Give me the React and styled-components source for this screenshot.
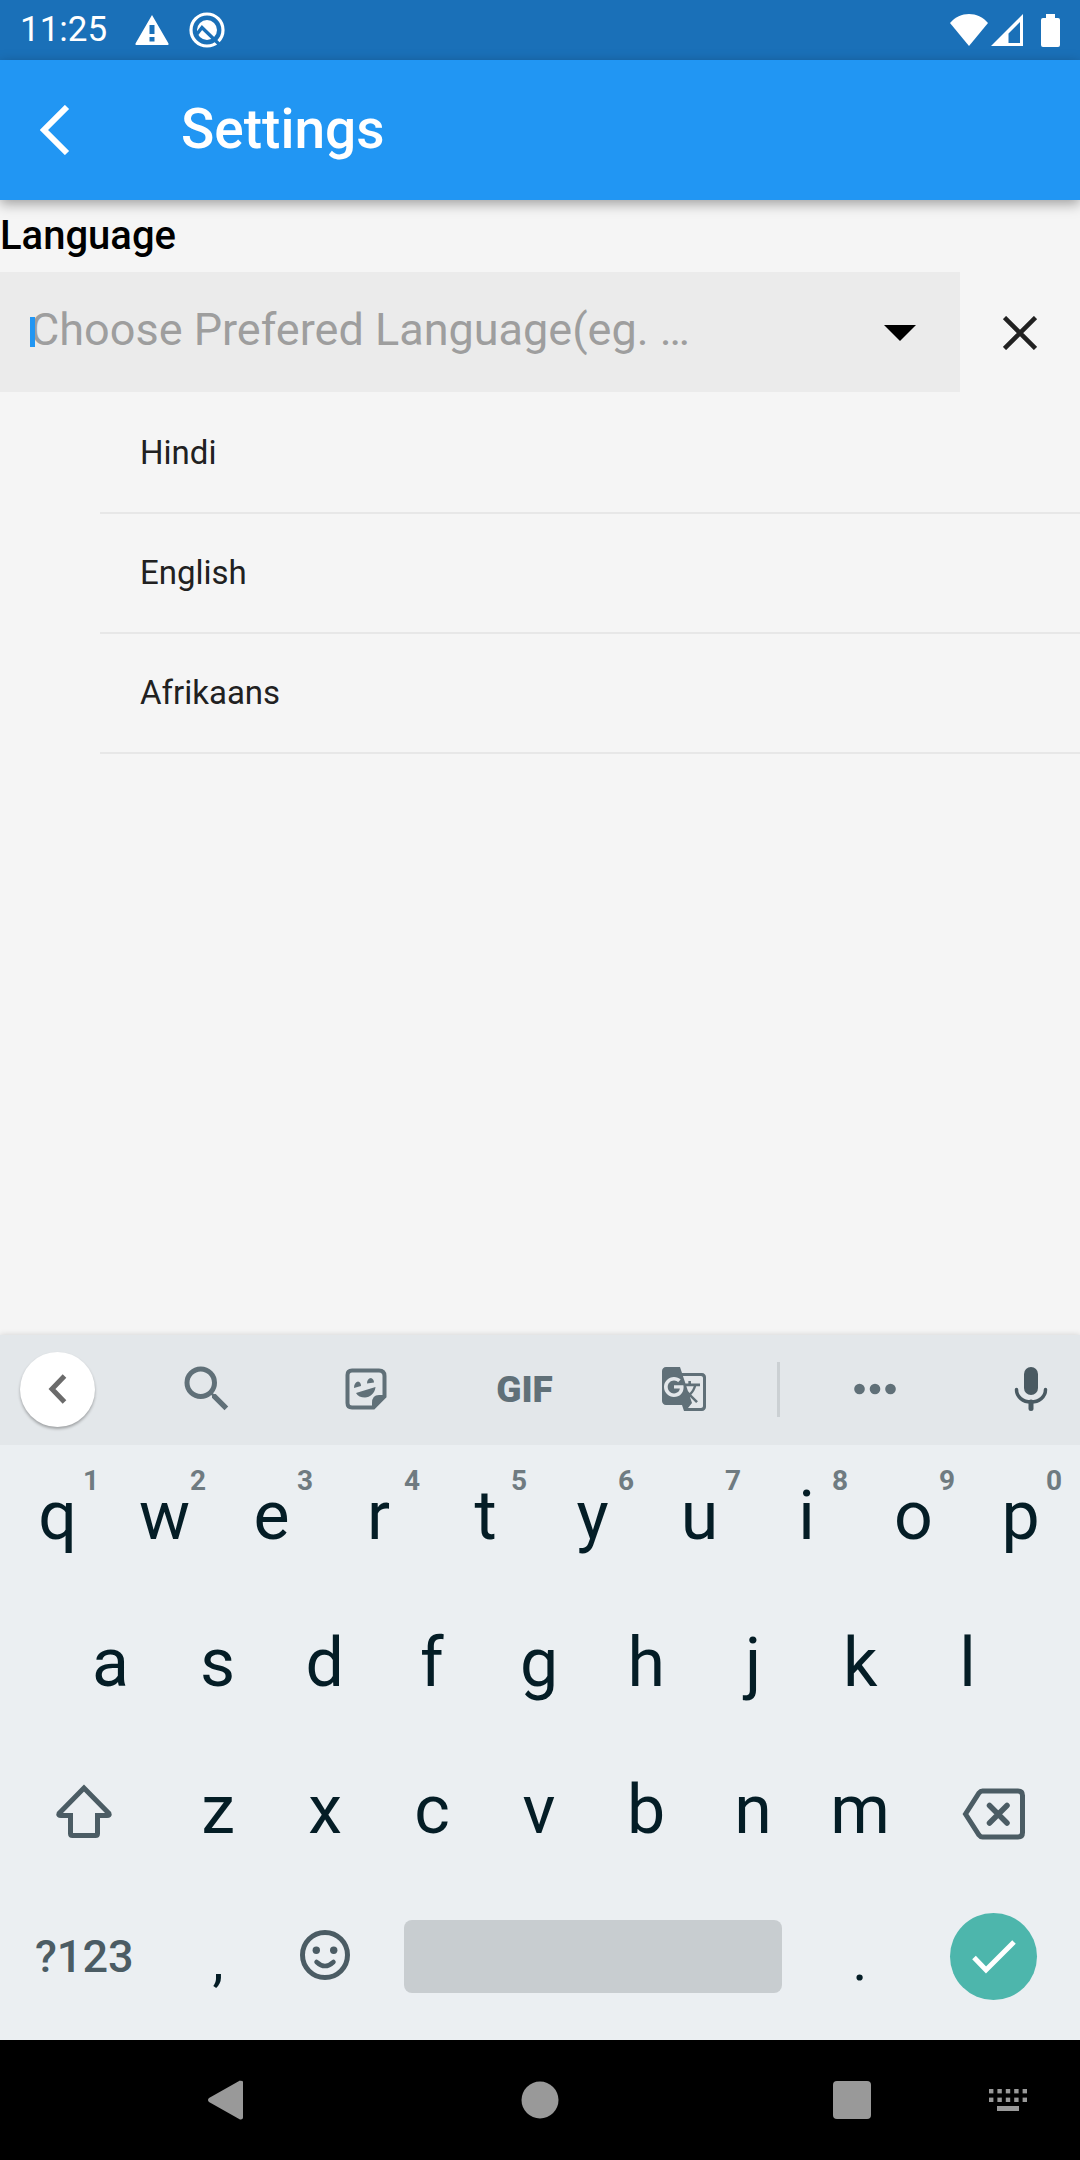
import React from "react";
import styled, { createGlobalStyle } from "styled-components";
import { MdSearch, MdGTranslate } from "react-icons/md";

const GlobalStyle = createGlobalStyle`
  *, *::before, *::after { box-sizing: border-box; }
  body {
    margin: 0;
    background: #f5f5f5;
    font-family: Roboto, "Liberation Sans", sans-serif;
  }
  button {
    margin: 0;
    padding: 0;
    border: 0;
    background: none;
    color: inherit;
    font: inherit;
    cursor: pointer;
  }
  svg { display: block; flex: none; }
`;

const Screen = styled.div`
  display: flex;
  flex-direction: column;
  min-height: 100vh;
`;

const StatusBar = styled.div`
  display: flex;
  align-items: center;
  justify-content: space-between;
  height: 60px;
  padding: 0 20px;
  background: #1a70b8;
  color: #fff;
`;

const StatusGroup = styled.div`
  display: flex;
  align-items: center;
  gap: ${(p) => p.$gap}px;
`;

const Clock = styled.span`
  margin-right: 8px;
  font-size: 35px;
  line-height: 42px;
`;

const AppBar = styled.header`
  position: relative;
  z-index: 1;
  display: flex;
  align-items: center;
  height: 140px;
  background: #2196f3;
  color: #fff;
  box-shadow: 0 4px 12px rgba(0, 0, 0, 0.35);
`;

const BackButton = styled.button`
  display: flex;
  align-items: center;
  width: 181px;
  height: 100%;
  padding-left: 40px;
`;

const Title = styled.h1`
  margin: 0;
  padding-bottom: 2px;
  font-size: 55px;
  font-weight: 500;
  line-height: 64px;
`;

const Content = styled.main`
  flex: 1;
  background: #f5f5f5;
`;

const FieldLabel = styled.label`
  display: block;
  color: #000;
  font-size: 40px;
  font-weight: 500;
  line-height: 72px;
`;

const PickerRow = styled.div`
  display: flex;
  height: 120px;
`;

const Field = styled.div`
  position: relative;
  display: flex;
  flex: 1;
  min-width: 0;
  background: #ebebeb;
`;

const LanguageInput = styled.input`
  flex: 1;
  min-width: 0;
  padding: 0 0 6px 30px;
  border: 0;
  outline: 0;
  background: transparent;
  color: #212121;
  font-family: inherit;
  font-size: 45px;
  &::placeholder { color: #9e9e9e; opacity: 1; }
`;

const Caret = styled.span`
  position: absolute;
  left: 30px;
  top: 45px;
  width: 5px;
  height: 30px;
  background: #2196f3;
`;

const PickerButton = styled.button`
  display: flex;
  align-items: center;
  justify-content: center;
  width: 120px;
  height: 100%;
  padding-top: 2px;
  color: ${(p) => p.$color};
`;

const LanguageList = styled.ul`
  margin: 0;
  padding: 2px 0 0 100px;
  list-style: none;
`;

const LanguageItem = styled.li`
  border-bottom: 2px solid #e7e7e7;
`;

const LanguageOption = styled.button`
  display: block;
  width: 100%;
  height: 118px;
  padding: 0 0 2px 40px;
  color: #212121;
  font-size: 33px;
  text-align: left;
`;

const Keyboard = styled.section`
  background: #ebeff2;
  box-shadow: 0 0 6px rgba(0, 0, 0, 0.15);
`;

const Toolbar = styled.div`
  display: flex;
  align-items: center;
  height: 110px;
  padding-bottom: 2px;
  background: #e3e7ea;
  color: #607078;
`;

const ToolSlot = styled.div`
  display: flex;
  justify-content: center;
  width: ${(p) => p.$width}px;
`;

const CollapseButton = styled.button`
  display: flex;
  align-items: center;
  justify-content: center;
  width: 75px;
  height: 75px;
  border-radius: 50%;
  background: #fff;
  color: #6b6b6b;
  box-shadow: 0 2px 3px rgba(0, 0, 0, 0.3);
`;

const Tools = styled.div`
  display: flex;
  flex: 1;
  padding: 0 14px 0 12px;
`;

const ToolButton = styled.button`
  display: flex;
  flex: 1;
  align-items: center;
  justify-content: center;
  height: 108px;
  font-size: 37px;
  font-weight: 900;
`;

const ToolDivider = styled.span`
  width: 3px;
  height: 55px;
  background: #cbd0d3;
`;

const VoiceButton = styled(ToolButton)`
  flex: none;
  width: 110px;
  padding-left: 12px;
  color: #4a5a62;
`;

const Keys = styled.div`
  padding-bottom: 7px;
`;

const KeyRow = styled.div`
  display: flex;
  height: 147px;
  padding: 0 ${(p) => (p.$inset || 5) + 1}px 0 ${(p) => (p.$inset || 5) - 1}px;
`;

const Key = styled.button`
  position: relative;
  display: flex;
  flex: ${(p) => p.$span || 1} 1 0;
  align-items: center;
  justify-content: center;
  min-width: 0;
  padding-bottom: 6px;
  color: #041d26;
  font-size: 68px;
`;

const FunctionKey = styled(Key)`
  color: #4b5c64;
  font-size: 45px;
  font-weight: 500;
`;

const PunctuationKey = styled(Key)`
  padding: 2px 0 0;
  font-size: 56px;
`;

const KeyHint = styled.span`
  position: absolute;
  top: 20px;
  right: 12px;
  color: #6f7b81;
  font-size: 28px;
  font-weight: 700;
  line-height: 32px;
`;

const SpaceBar = styled.span`
  width: calc(100% - 50px);
  height: 73px;
  border-radius: 8px;
  background: #c8cdd0;
`;

const EnterDisc = styled.span`
  display: flex;
  align-items: center;
  justify-content: center;
  width: 87px;
  height: 87px;
  border-radius: 50%;
  background: #4db6ac;
  color: #fff;
`;

const NavBar = styled.nav`
  display: grid;
  grid-template-columns: 168fr 456fr 168fr 144fr;
  height: 120px;
  padding-left: 144px;
  background: #000;
  color: #999;
`;

const NavButton = styled.button`
  display: flex;
  align-items: center;
  justify-content: center;
`;

const WarningIcon = () => (
  <svg width="34" height="30" viewBox="0 0 34 30" aria-hidden="true">
    <path fill="#fff" fillRule="evenodd" d="M17 0 33.5 28.5Q34 30 32.5 30H1.5Q0 30 .5 28.5ZM14.5 10v9h5v-9ZM14.5 22v4.500h5v-4.500Z" />
  </svg>
);

const AssistantIcon = () => (
  <svg width="36" height="36" viewBox="0 0 36 36" aria-hidden="true">
    <circle cx="18" cy="18" r="16" fill="none" stroke="#fff" strokeWidth="3.200" />
    <circle cx="18" cy="18" r="10" fill="#fff" />
    <path d="M8 22 13 15.500 33 35" fill="none" stroke="#1a70b8" strokeWidth="3.400" />
  </svg>
);

const WifiIcon = () => (
  <svg width="38" height="32" viewBox="0 0 38 32" aria-hidden="true">
    <path fill="#fff" d="M19 32 0 9C5 3 12 0 19 0s14 3 19 9Z" />
  </svg>
);

const SignalIcon = () => (
  <svg width="32" height="32" viewBox="0 0 32 32" aria-hidden="true">
    <path fill="#fff" fillRule="evenodd" d="M32 0V32H0ZM29 8 17.500 19.500V29H29Z" />
  </svg>
);

const BatteryIcon = () => (
  <svg width="19" height="33" viewBox="0 0 19 33" aria-hidden="true">
    <path fill="#fff" d="M5 0h9v4h3q2 0 2 2v25q0 2-2 2H2q-2 0-2-2V6q0-2 2-2h3Z" />
  </svg>
);

const BackIcon = () => (
  <svg width="30" height="50" viewBox="0 0 30 50" aria-hidden="true">
    <path d="M27 2 4 25 27 48" fill="none" stroke="currentColor" strokeWidth="6" />
  </svg>
);

const DropdownIcon = () => (
  <svg width="32" height="16" viewBox="0 0 32 16" aria-hidden="true">
    <path d="M0 0H32L16 16Z" fill="currentColor" />
  </svg>
);

const CloseIcon = () => (
  <svg width="34" height="34" viewBox="0 0 34 34" aria-hidden="true">
    <path d="M1.500 1.500 32.500 32.500M32.500 1.500 1.500 32.500" fill="none" stroke="currentColor" strokeWidth="4.500" />
  </svg>
);

const CollapseIcon = () => (
  <svg width="19" height="30" viewBox="0 0 19 30" aria-hidden="true">
    <path d="M16.500 2 4 15 16.500 28" fill="none" stroke="currentColor" strokeWidth="5" />
  </svg>
);

const StickerIcon = () => (
  <svg width="42" height="42" viewBox="0 0 42 42" aria-hidden="true">
    <path d="M7 2.500H34Q39.500 2.500 39.500 8V28.500L28.500 39.500H7Q2.500 39.500 2.500 35V7Q2.500 2.500 7 2.500Z" fill="none" stroke="currentColor" strokeWidth="4" />
    <path d="M27 40V35Q27 27 34 27H40V29L29 40Z" fill="currentColor" />
    <path d="M9 20Q9 14.500 13 13.500 16 14 16 18ZM22 15.500Q22 10.500 26 10 29 11 29 14.500ZM11 25 30.500 19C30 25 25 29.500 20 29.500 16 29.500 12.500 28 11 25Z" fill="currentColor" />
  </svg>
);

const MoreIcon = () => (
  <svg width="42" height="12" viewBox="0 0 42 12" aria-hidden="true" fill="currentColor">
    <circle cx="5.500" cy="6" r="5.300" />
    <circle cx="21" cy="6" r="5.300" />
    <circle cx="36.500" cy="6" r="5.300" />
  </svg>
);

const MicIcon = () => (
  <svg width="34" height="46" viewBox="0 0 34 46" aria-hidden="true">
    <rect x="10" y="1" width="14" height="28" rx="7" fill="currentColor" />
    <path d="M2.500 23.500C2.500 31 9 36 17 36S31.500 31 31.500 23.500" fill="none" stroke="currentColor" strokeWidth="3.500" strokeLinecap="round" />
    <path d="M17 36V42.500" stroke="currentColor" strokeWidth="5" strokeLinecap="round" />
  </svg>
);

const ShiftIcon = () => (
  <svg width="58" height="60" viewBox="0 -4 58 60" aria-hidden="true">
    <path d="M29 4 4 29.500Q3 31.500 6 31.500H15.500V49.500Q15.500 51.500 17.500 51.500H40.500Q42.500 51.500 42.500 49.500V31.500H52Q55 31.500 54 29.500Z" fill="none" stroke="currentColor" strokeWidth="5" />
  </svg>
);

const BackspaceIcon = () => (
  <svg width="64" height="60" viewBox="0 -8 64 60" aria-hidden="true">
    <path d="M3.500 26 17 5Q18.500 3 20.500 3H56Q60.500 3 60.500 7.500V44.500Q60.500 49 56 49H20.500Q18.500 49 17 47Z" fill="none" stroke="currentColor" strokeWidth="5" />
    <path d="M27.500 17.500 45 35M45 17.500 27.500 35" fill="none" stroke="currentColor" strokeWidth="5.500" strokeLinecap="round" />
  </svg>
);

const SmileIcon = () => (
  <svg width="50" height="53" viewBox="0 0 50 53" aria-hidden="true">
    <circle cx="25" cy="25" r="22.500" fill="none" stroke="currentColor" strokeWidth="5" />
    <circle cx="16.300" cy="20.300" r="3.700" fill="currentColor" />
    <circle cx="33.700" cy="20.300" r="3.700" fill="currentColor" />
    <path d="M16.500 32Q25 40 33.500 32" fill="none" stroke="currentColor" strokeWidth="4.500" strokeLinecap="round" />
  </svg>
);

const CheckIcon = () => (
  <svg width="44" height="34" viewBox="0 0 44 34" aria-hidden="true">
    <path d="M2 17.500 14 30 42 2" fill="none" stroke="currentColor" strokeWidth="5" />
  </svg>
);

const NavBackIcon = () => (
  <svg width="40" height="40" viewBox="1 0 40 40" aria-hidden="true">
    <path d="M34 1Q36 0 36 2.500V37.500Q36 40 33 39.500L2 22Q0 20 2 18L33 .5Z" fill="currentColor" />
  </svg>
);

const NavHomeIcon = () => (
  <svg width="38" height="38" viewBox="0 0 38 38" aria-hidden="true">
    <circle cx="19" cy="19" r="18.500" fill="currentColor" />
  </svg>
);

const NavRecentsIcon = () => (
  <svg width="38" height="38" viewBox="0 0 38 38" aria-hidden="true">
    <rect width="38" height="38" rx="4" fill="currentColor" />
  </svg>
);

const NavKeyboardIcon = () => (
  <svg width="38" height="22" viewBox="0 0 38 22" aria-hidden="true" fill="currentColor">
    {[0, 8.4, 16.8, 25.2, 33.600].map((x) => (
      <React.Fragment key={x}>
        <rect x={x} y="0" width="4.400" height="4.400" />
        <rect x={x} y="8.600" width="4.400" height="4.400" />
      </React.Fragment>
    ))}
    <rect x="8" y="17" width="22" height="5" />
  </svg>
);

const languages = ["Hindi", "English", "Afrikaans"];
const topKeys = [..."qwertyuiop"];
const homeKeys = [..."asdfghjkl"];
const bottomKeys = [..."zxcvbnm"];

export default function App() {
  return (
    <>
      <GlobalStyle />
      <Screen>
        <StatusBar>
          <StatusGroup $gap={20}>
            <Clock>11:25</Clock>
            <WarningIcon />
            <AssistantIcon />
          </StatusGroup>
          <StatusGroup $gap={3}>
            <WifiIcon />
            <StatusGroup $gap={18}>
              <SignalIcon />
              <BatteryIcon />
            </StatusGroup>
          </StatusGroup>
        </StatusBar>
        <AppBar>
          <BackButton aria-label="Back"><BackIcon /></BackButton>
          <Title>Settings</Title>
        </AppBar>
        <Content>
          <FieldLabel htmlFor="language">Language</FieldLabel>
          <PickerRow>
            <Field>
              <LanguageInput id="language" type="text" placeholder="Choose Prefered Language(eg. …" />
              <Caret />
              <PickerButton $color="#000" aria-label="Show languages"><DropdownIcon /></PickerButton>
            </Field>
            <PickerButton $color="#212121" aria-label="Clear"><CloseIcon /></PickerButton>
          </PickerRow>
          <LanguageList>
            {languages.map((name) => (
              <LanguageItem key={name}>
                <LanguageOption>{name}</LanguageOption>
              </LanguageItem>
            ))}
          </LanguageList>
        </Content>
        <Keyboard aria-label="Keyboard">
          <Toolbar>
            <ToolSlot $width={115}>
              <CollapseButton aria-label="Collapse toolbar"><CollapseIcon /></CollapseButton>
            </ToolSlot>
            <Tools>
              <ToolButton aria-label="Search"><MdSearch size={60} /></ToolButton>
              <ToolButton aria-label="Stickers"><StickerIcon /></ToolButton>
              <ToolButton>GIF</ToolButton>
              <ToolButton aria-label="Translate"><MdGTranslate size={48} /></ToolButton>
            </Tools>
            <ToolDivider />
            <ToolSlot $width={190}>
              <ToolButton aria-label="More"><MoreIcon /></ToolButton>
            </ToolSlot>
            <VoiceButton aria-label="Voice input"><MicIcon /></VoiceButton>
          </Toolbar>
          <Keys>
            <KeyRow>
              {topKeys.map((letter, i) => (
                <Key key={letter}>
                  {letter}
                  <KeyHint>{(i + 1) % 10}</KeyHint>
                </Key>
              ))}
            </KeyRow>
            <KeyRow $inset={58}>
              {homeKeys.map((letter) => <Key key={letter}>{letter}</Key>)}
            </KeyRow>
            <KeyRow>
              <FunctionKey $span={1.5} aria-label="Shift"><ShiftIcon /></FunctionKey>
              {bottomKeys.map((letter) => <Key key={letter}>{letter}</Key>)}
              <FunctionKey $span={1.5} aria-label="Backspace"><BackspaceIcon /></FunctionKey>
            </KeyRow>
            <KeyRow>
              <FunctionKey $span={1.5}>?123</FunctionKey>
              <PunctuationKey>,</PunctuationKey>
              <FunctionKey aria-label="Emoji"><SmileIcon /></FunctionKey>
              <Key $span={4} aria-label="Space"><SpaceBar /></Key>
              <PunctuationKey>.</PunctuationKey>
              <Key $span={1.5} aria-label="Done"><EnterDisc><CheckIcon /></EnterDisc></Key>
            </KeyRow>
          </Keys>
        </Keyboard>
        <NavBar aria-label="System">
          <NavButton aria-label="Back"><NavBackIcon /></NavButton>
          <NavButton aria-label="Home"><NavHomeIcon /></NavButton>
          <NavButton aria-label="Recent apps"><NavRecentsIcon /></NavButton>
          <NavButton aria-label="Switch keyboard"><NavKeyboardIcon /></NavButton>
        </NavBar>
      </Screen>
    </>
  );
}
